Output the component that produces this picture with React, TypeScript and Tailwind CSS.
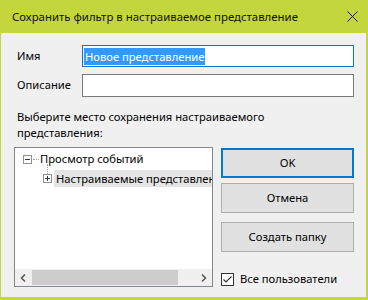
import React from "react";

function ExpandBox({ open }: { open: boolean }) {
  return (
    <svg width="9" height="9" viewBox="0 0 9 9" className="shrink-0">
      <rect x="0.5" y="0.5" width="8" height="8" fill="#fff" stroke="#919191" />
      <line x1="2" y1="4.5" x2="7" y2="4.5" stroke="#333" />
      {!open && <line x1="4.5" y1="2" x2="4.5" y2="7" stroke="#333" />}
    </svg>
  );
}

function Dots() {
  return <div className="w-[6px] border-t border-dotted border-[#a0a0a0] mx-[1px]" />;
}

export default function App() {
  return (
    <div
      className="w-[368px] h-[300px] bg-[#c3d63c] flex flex-col text-[11.2px] text-black overflow-hidden"
      style={{ fontFamily: '"Noto Sans", "Open Sans", sans-serif' }}
    >
      {/* Title bar */}
      <div className="h-[33px] flex items-center justify-between pl-[12px] pr-[10px] shrink-0">
        <span className="text-[11.4px] leading-none text-[#111]">
          Сохранить фильтр в настраиваемое представление
        </span>
        <svg width="11" height="11" viewBox="0 0 11 11">
          <path d="M0.5 0.5 L10.5 10.5 M10.5 0.5 L0.5 10.5" stroke="#111" strokeWidth="1" />
        </svg>
      </div>

      {/* Body */}
      <div className="flex-1 bg-[#f0f0f0] ml-[1px] mr-[2px] mb-[3px] pl-[16px] pr-[12px] pt-[12px] flex flex-col">
        <div className="flex items-center h-[22px]">
          <label className="w-[65px] shrink-0">Имя</label>
          <div className="flex-1 h-[22px] border border-[#0078d7] bg-white flex items-center px-[1px]">
            <span className="bg-[#3399ff] text-white leading-[17px] px-[1px]">Новое представление</span>
          </div>
        </div>
        <div className="flex items-center h-[23px] mt-[7px]">
          <label className="w-[65px] shrink-0">Описание</label>
          <div className="flex-1 h-[23px] border border-[#7a7a7a] bg-white" />
        </div>

        <p className="mt-[12px] leading-[16px]">
          Выберите место сохранения настраиваемого
          <br />
          представления:
        </p>

        <div className="flex mt-[6px] -ml-[3px]">
          {/* Tree */}
          <div className="w-[199px] h-[140px] border border-[#828790] bg-white flex flex-col shrink-0">
            <div className="flex-1 overflow-hidden pt-[3px]">
              <div className="flex items-center h-[17px] pl-[8px] whitespace-nowrap">
                <ExpandBox open />
                <Dots />
                <span>Просмотр событий</span>
              </div>
              <div className="relative flex items-center h-[17px] mt-[2px] pl-[28px] whitespace-nowrap">
                <div className="absolute left-[32px] -top-[6px] h-[10px] border-l border-dotted border-[#a0a0a0]" />
                <ExpandBox open={false} />
                <Dots />
                <span className="bg-[#e5e5e5] pl-[2px] pr-[4px] leading-[17px]">Настраиваемые представления</span>
              </div>
            </div>
            <div className="h-[17px] bg-[#f0f0f0] flex items-center shrink-0">
              <div className="w-[17px] flex justify-center">
                <svg width="7" height="8" viewBox="0 0 7 8">
                  <path d="M5 0.5 L1.5 4 L5 7.5" stroke="#555" strokeWidth="1.5" fill="none" />
                </svg>
              </div>
              <div className="w-[146px] h-[15px] bg-[#cdcdcd]" />
              <div className="flex-1 flex justify-end pr-[5px]">
                <svg width="7" height="8" viewBox="0 0 7 8">
                  <path d="M2 0.5 L5.5 4 L2 7.5" stroke="#555" strokeWidth="1.5" fill="none" />
                </svg>
              </div>
            </div>
          </div>

          {/* Buttons */}
          <div className="flex-1 ml-[8px] flex flex-col">
            <button className="h-[30px] mt-[1px] bg-[#e1e1e1] border-2 border-[#0078d7]">OK</button>
            <button className="h-[30px] mt-[5px] bg-[#e1e1e1] border border-[#adadad]">Отмена</button>
            <button className="h-[30px] mt-[9px] bg-[#e1e1e1] border border-[#adadad]">Создать папку</button>
            <label className="flex items-center mt-[19px] gap-[6px]">
              <svg width="13" height="13" viewBox="0 0 13 13">
                <rect x="0.5" y="0.5" width="12" height="12" fill="#fff" stroke="#333" />
                <path d="M2.5 6.5 L5 9 L10.5 3.5" stroke="#333" strokeWidth="1.2" fill="none" />
              </svg>
              <span>Все пользователи</span>
            </label>
          </div>
        </div>
      </div>
    </div>
  );
}
